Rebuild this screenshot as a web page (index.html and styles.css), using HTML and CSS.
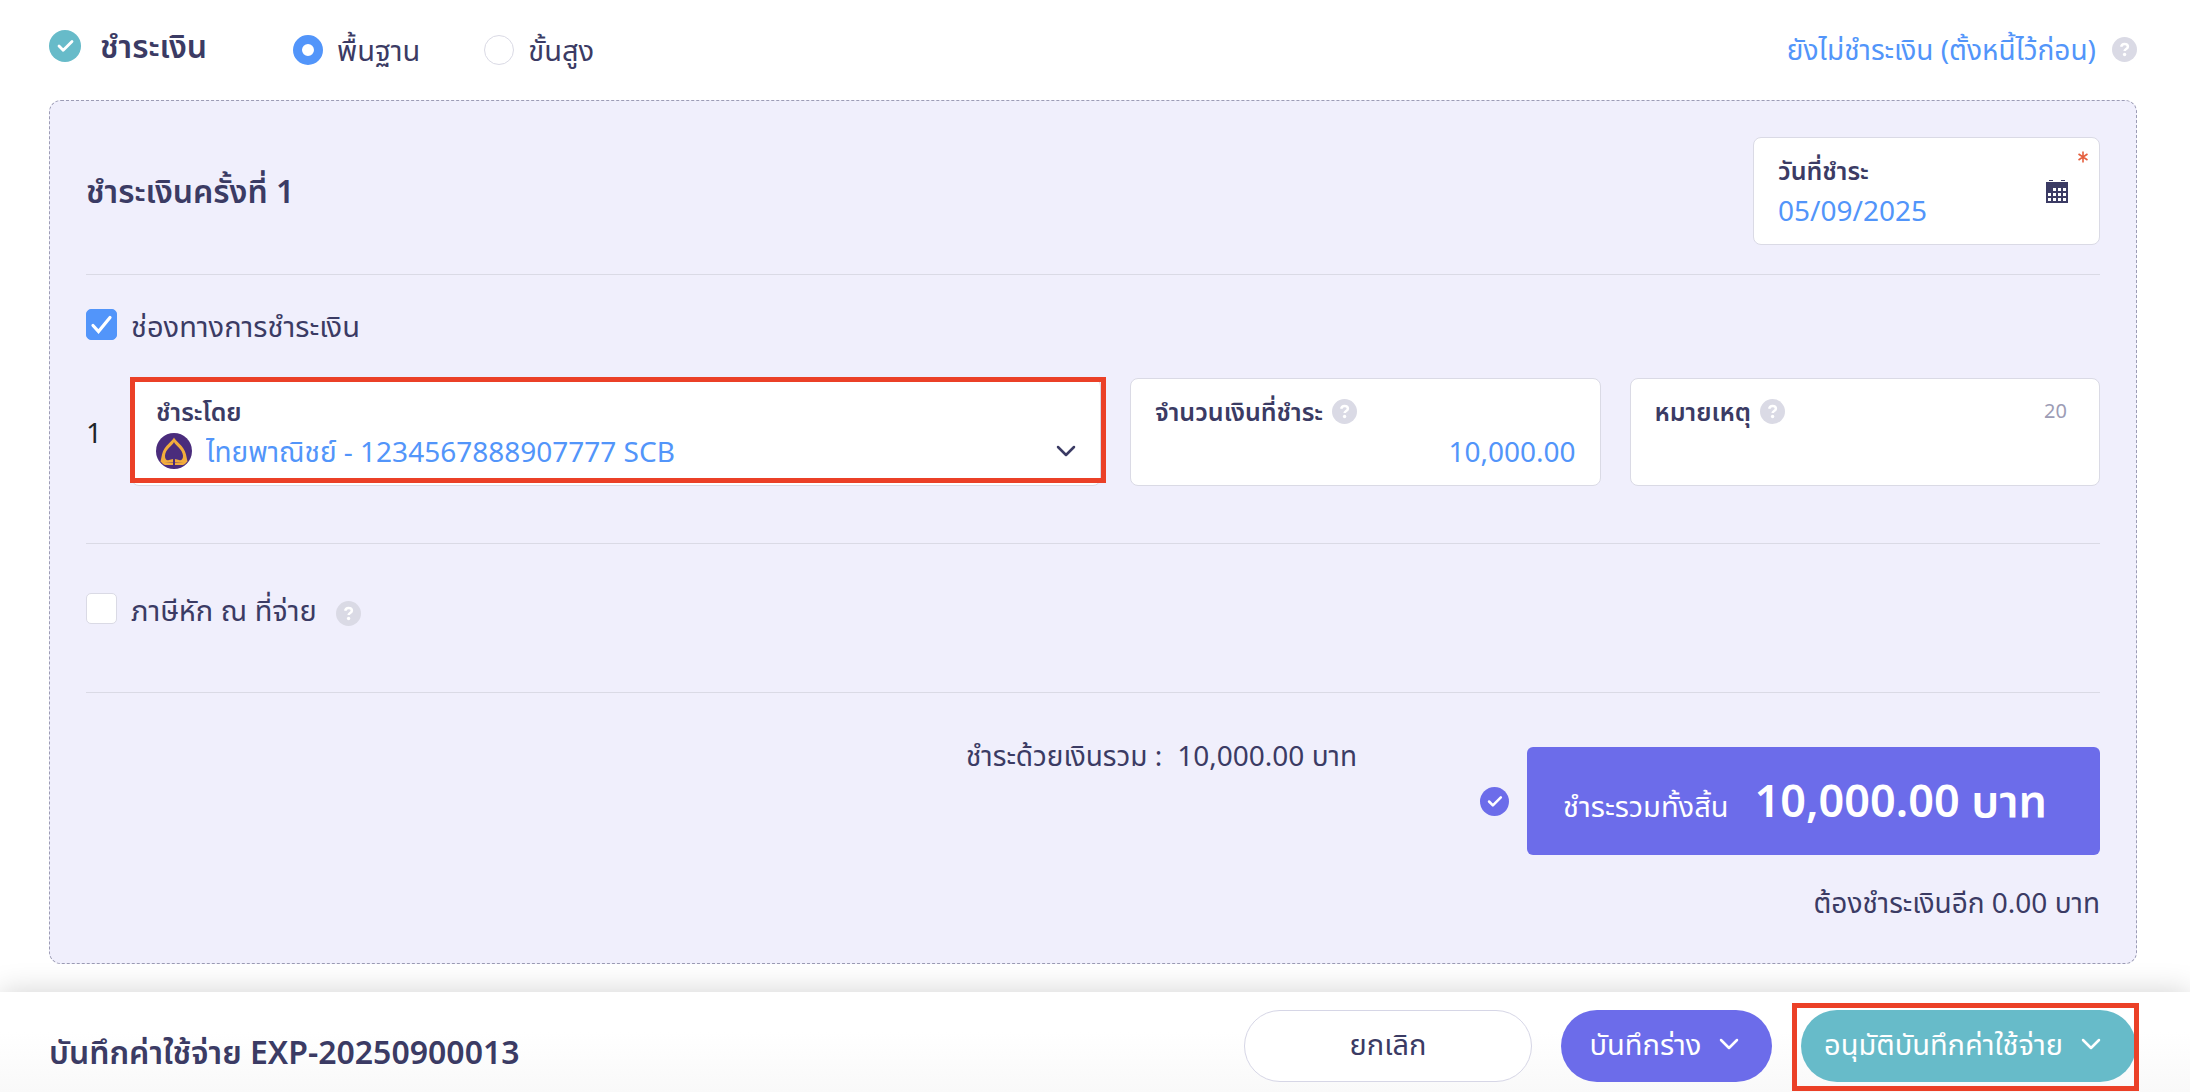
FILE: index.html
```html
<!DOCTYPE html>
<html lang="th">
<head>
<meta charset="utf-8">
<meta name="viewport" content="width=device-width, initial-scale=1">
<title>บันทึกค่าใช้จ่าย EXP-20250900013</title>
<link rel="stylesheet" href="styles.css">
</head>
<body>
<svg class="sprite" aria-hidden="true">
  <symbol id="help" viewBox="0 0 25 25">
    <circle cx="12.5" cy="12.5" r="12.5" fill="#dadae5"/>
    <path d="M9.2 9.800c.3-1.900 1.600-2.800 3.300-2.800 1.900 0 3.400 1 3.400 2.700 0 2.300-3.200 2.300-3.300 4.300" fill="none" stroke="#fff" stroke-width="2.500"/>
    <circle cx="12.600" cy="17.500" r="1.700" fill="#fff"/>
  </symbol>
  <symbol id="chevron" viewBox="0 0 20 12">
    <path d="M2 2l8 8 8-8" fill="none" stroke="currentColor" stroke-width="2.500" stroke-linecap="round" stroke-linejoin="round"/>
  </symbol>
  <symbol id="tick" viewBox="0 0 32 32">
    <circle cx="16" cy="16" r="16" fill="currentColor"/>
    <path d="M10 16l4.200 4.300L23 11.500" fill="none" stroke="#fff" stroke-width="2.800" stroke-linecap="round" stroke-linejoin="round"/>
  </symbol>
</svg>

<main class="page">
  <header class="top">
    <h1 class="top-title"><svg class="icon-tick"><use href="#tick"/></svg>ชำระเงิน</h1>
    <div class="modes">
      <label class="choice"><input class="radio" type="radio" name="mode" checked>พื้นฐาน</label>
      <label class="choice"><input class="radio" type="radio" name="mode">ขั้นสูง</label>
    </div>
    <div class="defer">
      <a class="link" href="#">ยังไม่ชำระเงิน (ตั้งหนี้ไว้ก่อน)</a>
      <svg class="icon-help"><use href="#help"/></svg>
    </div>
  </header>

  <section class="panel">
    <div class="block head">
      <h2 class="panel-title">ชำระเงินครั้งที่ 1</h2>
      <div class="field date">
        <div class="label-row"><label class="label" for="paid-on">วันที่ชำระ</label></div>
        <input class="value" id="paid-on" type="text" value="05/09/2025">
        <svg class="required" viewBox="0 0 10 12" role="img" aria-label="จำเป็น"><path d="M5 .5v11M.5 3l9 6M9.500 3l-9 6" stroke="#e5603f" stroke-width="1.600"/></svg>
        <svg class="icon-calendar" viewBox="0 0 22 24">
          <path d="M3 0h4v1H3zM15 0h4v1h-4zM0 2h22v21H0z" fill="#3b3b64"/>
          <path d="M7 8h3v3H7zM12 8h3v3h-3zM17 8h3v3h-3zM2 13h3v3H2zM7 13h3v3H7zM12 13h3v3h-3zM17 13h3v3h-3zM2 18h3v3H2zM7 18h3v3H7zM12 18h3v3h-3zM17 18h3v3h-3z" fill="#fff"/>
        </svg>
      </div>
    </div>

    <div class="block channel">
      <label class="choice"><input class="check" type="checkbox" checked>ช่องทางการชำระเงิน</label>
      <div class="channel-row">
        <span class="index">1</span>
        <div class="field account marked">
          <div class="label-row"><label class="label" for="account">ชำระโดย</label></div>
          <div class="bank">
            <svg class="icon-bank" viewBox="0 0 36 36">
              <circle cx="18" cy="18" r="18" fill="#4a2c7c"/>
              <path d="M18 4.500c-1 3.500-10 8-12 17L4.500 28.500c1.500 1.500 3 3 4.500 3.500h18c1.500-.5 3-2 4.500-3.500L30 21.500C28 12.500 19 8 18 4.500z" fill="#f2ac3c"/>
              <path d="M18 9c-1 3-8.500 7-9 13.500-.3 4 2 5.500 4 4.500l4-1v3.500H8.500L17 30v6h2v-6l8.500-.5H19V26l4 1c2 1 4.300-.5 4-4.500C26.500 16 19 12 18 9z" fill="#4a2c7c"/>
            </svg>
            <select class="value" id="account"><option>ไทยพาณิชย์ - 1234567888907777 SCB</option></select>
            <svg class="icon-chevron"><use href="#chevron"/></svg>
          </div>
        </div>
        <div class="field">
          <div class="label-row"><label class="label" for="amount">จำนวนเงินที่ชำระ</label><svg class="icon-help"><use href="#help"/></svg></div>
          <input class="value amount" id="amount" type="text" value="10,000.00">
        </div>
        <div class="field">
          <div class="label-row"><label class="label" for="note">หมายเหตุ</label><svg class="icon-help"><use href="#help"/></svg><span class="count">20</span></div>
          <input class="value" id="note" type="text">
        </div>
      </div>
    </div>

    <div class="block tax">
      <label class="choice"><input class="check" type="checkbox">ภาษีหัก ณ ที่จ่าย</label>
      <svg class="icon-help"><use href="#help"/></svg>
    </div>

    <div class="summary">
      <p class="subtotal"><span>ชำระด้วยเงินรวม :</span><span>10,000.00 บาท</span></p>
      <div class="totals">
        <div class="total-row">
          <svg class="icon-tick small"><use href="#tick"/></svg>
          <p class="total"><span>ชำระรวมทั้งสิ้น</span><strong class="total-sum">10,000.00 บาท</strong></p>
        </div>
        <p class="remaining">ต้องชำระเงินอีก 0.00 บาท</p>
      </div>
    </div>
  </section>
</main>

<footer class="bar">
  <h2 class="bar-title">บันทึกค่าใช้จ่าย EXP-20250900013</h2>
  <div class="actions">
    <button class="btn cancel" type="button">ยกเลิก</button>
    <button class="btn draft" type="button">บันทึกร่าง<svg class="icon-chevron"><use href="#chevron"/></svg></button>
    <div class="marked approve-wrap"><button class="btn approve" type="button">อนุมัติบันทึกค่าใช้จ่าย<svg class="icon-chevron"><use href="#chevron"/></svg></button></div>
  </div>
</footer>
</body>
</html>
```
FILE: styles.css
```css
* { box-sizing: border-box; }
body {
  margin: 0;
  min-height: 100vh;
  display: flex;
  flex-direction: column;
  background: #fff;
  color: #3b3b64;
  font-family: "Noto Sans", "Noto Sans Thai", sans-serif;
  font-size: 28px;
  line-height: 44px;
}
h1, h2, p { margin: 0; }
svg { flex: none; display: block; }
input, select, button { font: inherit; color: inherit; }
.sprite { position: absolute; width: 0; height: 0; }

.icon-help { width: 25px; height: 25px; }
.icon-chevron { width: 20px; height: 12px; }
.icon-tick { width: 32px; height: 32px; color: #67bbc9; }
.icon-tick.small { width: 29px; height: 29px; color: #6c6cea; }
.icon-bank { width: 36px; height: 36px; }

.page { flex: 1; padding: 0 53px 28px 49px; }
.top { display: flex; align-items: flex-start; height: 100px; padding-top: 24px; }
.top-title { display: flex; align-items: center; gap: 19px; width: 244px; font-size: 32px; font-weight: 600; }
.modes { display: flex; gap: 64px; padding-top: 4px; }
.choice { display: flex; align-items: center; gap: 14px; font-size: 29px; }
.defer { display: flex; align-items: center; gap: 16px; margin-left: auto; padding-top: 3px; }
.link { color: #5295fa; text-decoration: none; }

.radio, .check { appearance: none; flex: none; margin: 0; background: #fff; border: 1px solid #dadae5; }
.radio { width: 30px; height: 30px; border-radius: 50%; }
.radio:checked { border: 9px solid #5295fa; }
.check { width: 31px; height: 31px; margin-bottom: 4px; border-radius: 5px; }
.check:checked {
  border-color: #5295fa;
  background: #5295fa url("data:image/svg+xml,%3Csvg xmlns='http://www.w3.org/2000/svg' viewBox='0 0 29 29'%3E%3Cpath d='M6 15.500l5.500 6L23 7.500' fill='none' stroke='white' stroke-width='3.200' stroke-linecap='round'/%3E%3C/svg%3E") center / 29px no-repeat;
}

.panel { padding: 36px 36px 39px; background: #f0effc; border: 1px dashed #9c9cb5; border-radius: 12px; }
.block { border-bottom: 1px solid #dadae5; }
.head { display: flex; justify-content: space-between; align-items: center; padding-bottom: 29px; }
.panel-title { font-size: 32px; font-weight: 600; }

.field { position: relative; min-width: 0; height: 108px; padding: 14px 24px 12px; background: #fff; border: 1px solid #dadae5; border-radius: 8px; }
.date { width: 347px; }
.label-row { display: flex; align-items: center; gap: 9px; height: 36px; }
.label { font-size: 25px; font-weight: 600; line-height: 34px; }
.value { display: block; width: 100%; height: 44px; padding: 0; border: 0; outline: 0; background: none; color: #5295fa; }
.amount { text-align: right; }
.count { margin-left: auto; padding-right: 8px; font-size: 20px; color: #9c9cb5; }
.required { position: absolute; top: 13px; right: 11px; width: 10px; height: 12px; }
.icon-calendar { position: absolute; top: 42px; right: 31px; width: 22px; height: 24px; }

.channel { padding: 29px 0 57px; }
.channel-row { display: grid; grid-template-columns: 16px repeat(4, 1fr); gap: 29px; align-items: center; padding-top: 30px; }
.index { color: #212529; }
.account { grid-column: span 2; }
.bank { display: flex; align-items: center; gap: 14px; }
.bank select { appearance: none; flex: 1; min-width: 0; }

.tax { display: flex; align-items: center; gap: 19px; padding: 44px 0 60px; }
.tax .icon-help { margin-top: 6px; }

.summary { display: flex; justify-content: flex-end; gap: 123px; padding-top: 40px; }
.subtotal { display: flex; gap: 15px; }
.totals { padding-top: 14px; }
.total-row { display: flex; align-items: center; gap: 18px; }
.total { display: flex; align-items: baseline; gap: 26px; width: 573px; height: 108px; padding: 26px 36px; background: #6c6cea; border-radius: 6px; color: #fff; font-size: 29px; }
.total-sum { font-size: 45px; font-weight: 600; line-height: 54px; }
.remaining { padding-top: 25px; text-align: right; }

.bar { display: flex; justify-content: space-between; height: 100px; padding: 18px 54px 0 49px; background: linear-gradient(#fff 40%, #f9f9f9); box-shadow: 0 0 28px rgba(0, 0, 0, .18); }
.bar-title { padding-top: 20px; font-size: 32px; font-weight: 600; }
.actions { display: flex; gap: 29px; align-items: flex-start; }
.btn { display: flex; align-items: center; justify-content: center; height: 72px; padding: 0 0 4px; border: 0; border-radius: 36px; color: #fff; font-size: 29px; }
.cancel { width: 288px; background: #fff; border: 1px solid #d6d6e6; color: #3b3b64; }
.draft { width: 211px; gap: 18px; padding-right: 4px; background: #6c6cea; }
.approve { width: 335px; gap: 18px; padding-right: 12px; background: #67bbc9; }

.marked { position: relative; }
.marked::after { content: ""; position: absolute; border: 5px solid #eb4027; pointer-events: none; }
.account::after { inset: -2px -6px 2px -2px; }
.approve-wrap::after { inset: -7px -3px -9px -9px; }
```
